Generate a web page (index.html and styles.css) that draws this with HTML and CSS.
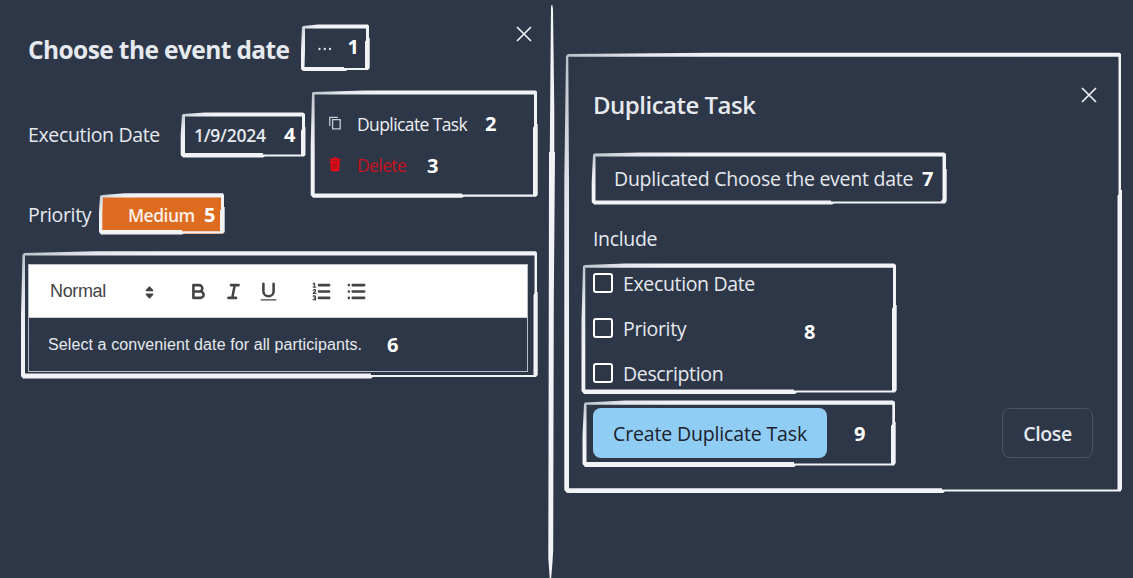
FILE: index.html
```html
<!DOCTYPE html>
<html lang="en">
<head>
<meta charset="utf-8">
<title>Duplicate Task</title>
<link rel="stylesheet" href="styles.css">
</head>
<body>
<main class="board">
  <section class="panel task">
    <header class="task-head">
      <h1 class="task-title"><span class="t">Choose the event date</span></h1>
      <button class="more"><svg width="16" height="4" viewBox="0 0 16 4"><circle cx="2.5" cy="2" r="1.15"/><circle cx="7.8" cy="2" r="1.15"/><circle cx="13" cy="2" r="1.15"/></svg></button>
      <b class="num">1</b>
      <button class="x"><svg width="16" height="16" viewBox="0 0 16 16"><path d="M1 1 15 15M15 1 1 15"/></svg></button>
    </header>
    <div class="field">
      <span class="label exec"><span class="t">Execution Date</span></span>
      <span class="date"><span class="t">1/9/2024</span></span>
      <b class="num">4</b>
    </div>
    <div class="field prio-row">
      <span class="label prio"><span class="t">Priority</span></span>
      <span class="badge"><span class="t">Medium</span><b class="num">5</b></span>
    </div>
    <div class="editor">
      <div class="toolbar">
        <span class="picker"><span class="t">Normal</span><svg width="9" height="13" viewBox="0 0 9 13"><path d="M4.5 1.2 7.5 4.4H1.5ZM1.5 8.4H7.5L4.5 11.6Z"/></svg></span>
        <svg class="tool bold" viewBox="0 0 18 18"><path d="M5 4H9.5A2.5 2.5 0 0 1 12 6.5V6.5A2.5 2.5 0 0 1 9.5 9H5ZM5 9H10.5A2.5 2.5 0 0 1 13 11.5V11.5A2.5 2.5 0 0 1 10.5 14H5Z"/></svg>
        <svg class="tool italic" viewBox="0 0 18 18"><path d="M7 4H13M5 14H11M8 14 10 4"/></svg>
        <svg class="tool under" viewBox="0 0 18 18"><path d="M5 3V9A4.012 4.012 0 0 0 13 9V3"/><path class="thin" d="M3.2 15.5H14.8"/></svg>
        <svg class="tool ordered" viewBox="0 0 18 18"><path d="M7 4H15M7 9H15M7 14H15"/><path class="thin" d="M2.5 5.5H4.5M3.5 5.5V2.5L2.6 3"/><path class="thin" d="M2.5 8C3 7.2 4.5 7.3 4.4 8.3 4.3 9 2.8 9.7 2.6 10.5H4.6"/><path class="thin" d="M2.5 12.6C3.3 12.2 4.4 12.4 4.3 13.2 4.2 14 3.3 14 3.3 14 4.8 14 4.8 15.5 3.6 15.6 3.1 15.6 2.7 15.5 2.4 15.3"/></svg>
        <svg class="tool bullet" viewBox="0 0 18 18"><path d="M6 4H15M6 9H15M6 14H15M3 4H3.01M3 9H3.01M3 14H3.01"/></svg>
      </div>
      <div class="content"><span class="t">Select a convenient date for all participants.</span><b class="num">6</b></div>
    </div>
    <div class="menu">
      <div class="item"><svg class="mi" width="14" height="15" viewBox="0 0 14 15"><path d="M0.8 10V1.3H9M3.6 3.7H11.2V12.8H3.6Z"/></svg><span class="t dup">Duplicate Task</span><b class="num">2</b></div>
      <div class="item danger"><svg class="mi" width="14" height="15" viewBox="0 0 14 15"><path fill-rule="evenodd" d="M0.5 2.1H3.2L4.3 0.3H7.7L8.8 2.1H11.5V3.9H0.5ZM4.4 2.1H7.6L7.1 1.4H4.9ZM1.3 3.5H10.7L10.2 13Q10.1 14.3 9 14.3H3Q1.9 14.3 1.8 13Z"/><path class="slot" d="M4.1 5.6V12.6M6 5.6V12.6M7.9 5.6V12.6"/></svg><span class="t del">Delete</span><b class="num">3</b></div>
    </div>
  </section>
  <section class="panel dialog">
    <header class="dialog-head">
      <h2 class="dialog-title"><span class="t">Duplicate Task</span></h2>
      <button class="x"><svg width="16" height="16" viewBox="0 0 16 16"><path d="M1 1 15 15M15 1 1 15"/></svg></button>
    </header>
    <div class="name"><span class="t">Duplicated Choose the event date</span><b class="num">7</b></div>
    <div class="include"><span class="t">Include</span></div>
    <div class="options">
      <div class="checks">
        <label class="check"><i class="box"></i><span class="t">Execution Date</span></label>
        <label class="check"><i class="box"></i><span class="t">Priority</span></label>
        <label class="check"><i class="box"></i><span class="t">Description</span></label>
      </div>
      <b class="num">8</b>
    </div>
    <footer class="actions">
      <button class="create"><span class="t">Create Duplicate Task</span></button>
      <b class="num">9</b>
      <button class="close"><span class="t">Close</span></button>
    </footer>
  </section>
  <svg class="marks" width="1133" height="578" viewBox="0 0 1133 578">
    <defs><linearGradient id="ink" x1="0" y1="0" x2="0.25" y2="0.1"><stop offset="0" stop-color="#b9bfc9"/><stop offset="0.5" stop-color="#e4e7ed"/><stop offset="1" stop-color="#f1f3f7"/></linearGradient></defs>
    <g fill="url(#ink)" fill-rule="evenodd">
      <path d="M303 26 318 24.5H368L369 26V38H369.7V68L368 70H347L346 71H303L301 69V50L302 27ZM305 28.5V50L304.5 67H344V68H365V42L366 40V28.5Z"/>
      <path d="M313 92 365 90.5H536L537 92V124H537.7V195L536 196.8H464L462 197.8H313L310.7 195V145L312 93ZM314.5 94.5 314.7 145V193.5H462V194.5H533V128L534 126V94.5Z"/>
      <path d="M183 114 205 112.5H303L305 114V127H305.5V155L304 156.5H265L263 157.5H183L180.7 155V135L182 115ZM185 116.5V153H263V154.5H301V131L302 129V116.5Z"/>
      <path d="M102 195 125 193.3H223L224 195V207H224.7V232L223 233.5H184L182 234.5H101L99 232V212L100 196ZM103 197.5 102.3 212V230H182V231.3H220V211L221 209V197.5Z"/>
      <path d="M24 253 95 251.3H536L537 253V292H537.7V375L536 377H373L371 378.5H23L21 376V315L22.5 255ZM25 255.5V373.5H371V375H533.5V295L534.5 293V255.5Z"/>
      <path d="M568 54 710 52.7H1119.5L1121 54V190H1122V489L1120.5 491.5H945L943 493H567L564.3 490V180L566 56ZM568.3 56.8 569 180V488.3H942V489.5H1117.5V196L1118.5 194V56.8Z"/>
      <path d="M594 153.5 640 152.5H944L946 154V169H946.7V201L945 203.5H834L832 204.5H594L591.7 202V182L593 155ZM595.5 156.5V200.5H831V201.5H941L942.5 199V156.5Z"/>
      <path d="M585 265 625 263.5H894L896 265V305H896.7V390L895 392.5H797L795 394H584L581.5 391V320L583 266ZM585.3 267.7V389.5H794V390.5H892V309L893 307V267.7Z"/>
      <path d="M585 402.5 625 400.5H893L895 402V422H895.7V463L894 465.5H796L794 467H585L582.5 464V435L584 404ZM586.5 404.7V462H794V463.5H891V426L892.3 424V404.7Z"/>
      <path d="M551 7 551.6 5H552.3L553 9 554.3 110V152H555L553.8 300 553.2 550 552.5 562 551.2 578H549.7L548.3 558 548.8 300 549 152H549.8L550.5 60Z"/>
    </g>
  </svg>
</main>
</body>
</html>
```
FILE: styles.css
```css
* { box-sizing: border-box; }
body { margin: 0; background: #2d3748; color: #e6e9ee; font-family: "Open Sans", "Noto Sans", sans-serif; font-size: 19.5px; letter-spacing: -0.35px; line-height: 28px; }
button { padding: 0; border: 0; background: none; color: inherit; font: inherit; letter-spacing: inherit; display: flex; align-items: center; justify-content: center; }
h1, h2 { margin: 0; }
svg { display: block; flex: none; }
.t { white-space: nowrap; }
.board { position: relative; width: 1133px; height: 578px; display: grid; grid-template-columns: 564px 569px; overflow: hidden; }
.panel { position: relative; }
.num { font-weight: 700; font-size: 20px; color: #fff; letter-spacing: 0; }
.x svg { fill: none; stroke: #eceef2; stroke-width: 1.7; }
.task { padding: 27px 28px 0 28px; }
.task-head { display: flex; align-items: center; height: 46px; }
.task-title { flex: none; width: 289px; font-size: 24.5px; font-weight: 700; letter-spacing: -0.6px; }
.more { flex: none; width: 16px; height: 20px; margin-top: -2px; }
.more svg { fill: #e6e9ee; }
.task-head .num { flex: none; width: 12px; margin: -6px 0 0 14px; text-align: right; }
.task-head .x { flex: none; width: 16px; margin: -32px 0 0 157px; }
.field { display: flex; align-items: center; height: 44px; margin-top: 40px; }
.exec { width: 166px; }
.date { width: 90px; font-size: 17.5px; font-weight: 600; letter-spacing: -0.25px; }
.prio-row { height: 38px; margin-top: 39px; }
.prio { width: 73px; }
.badge { display: flex; align-items: center; width: 122px; height: 38px; padding-left: 27px; background: #dd6b20; color: #fbefe6; font-size: 17.5px; font-weight: 600; letter-spacing: -0.5px; }
.badge .t { width: 76px; }
.editor { width: 500px; height: 108px; margin-top: 30px; border: 1px solid #b8bec8; font-family: "Liberation Sans", Arial, sans-serif; }
.toolbar { display: flex; align-items: center; height: 53px; padding-left: 21px; background: #fff; border-bottom: 1px solid #ccc; color: #444; font-size: 18px; }
.picker { display: flex; align-items: center; justify-content: space-between; width: 104px; }
.picker svg { margin-top: 2px; fill: #444; stroke: #444; stroke-width: 1.6; stroke-linejoin: round; }
.tool { width: 23px; height: 23px; margin-top: 1px; fill: none; stroke: #444; stroke-width: 2; stroke-linecap: round; stroke-linejoin: round; }
.tool .thin { stroke-width: 1; }
.bold { margin-left: 33px; }
.italic, .under, .bullet { margin-left: 12px; }
.ordered { margin-left: 30px; }
.content { display: flex; align-items: center; height: 53px; padding-left: 19px; font-size: 16px; letter-spacing: 0.1px; }
.content .t { width: 339px; }
.content .num { font-family: "Open Sans", sans-serif; }
.menu { position: absolute; left: 312px; top: 92px; width: 224px; height: 104px; padding: 11px 0 0 17px; font-size: 17.5px; letter-spacing: -0.6px; }
.item { display: flex; align-items: center; height: 42px; color: #eef0f4; }
.mi { margin-top: -2px; fill: none; stroke: #c5cad3; stroke-width: 1.3; }
.item .dup { margin-left: 14px; width: 128px; }
.item .del { margin-left: 14px; width: 70px; margin-top: -2px; }
.danger { color: #c9101c; }
.danger .mi { margin-top: -4px; fill: #f30610; stroke: none; }
.danger .slot { stroke: #7d1c2c; stroke-width: 0.8; }
.dialog { padding: 79px 36px 0 29px; }
.dialog-head { display: flex; justify-content: space-between; height: 52px; align-items: center; }
.dialog-head .x { margin: -20px 0 0 0; width: 16px; }
.dialog-title { font-size: 24px; font-weight: 600; letter-spacing: -0.5px; }
.name { display: flex; align-items: center; height: 50px; margin-top: 23px; padding-left: 21px; letter-spacing: -0.25px; }
.name .t { width: 308px; }
.include { margin-top: 21px; }
.options { display: flex; align-items: center; height: 120px; margin-top: 16px; }
.options .num { margin-top: 6px; }
.checks { display: grid; gap: 17px; width: 211px; }
.check { display: flex; align-items: center; gap: 10px; height: 28px; }
.box { width: 20px; height: 20px; margin-top: -2px; border: 2px solid #fff; border-radius: 3px; }
.actions { display: flex; align-items: center; margin-top: 19px; }
.actions .t { margin-top: 1px; }
.create { width: 234px; height: 50px; border-radius: 8px; background: #90cdf4; color: #1a202c; font-weight: 500; letter-spacing: -0.15px; }
.actions .num { margin-left: 27px; margin-top: 1px; }
.close { width: 91px; height: 50px; margin-left: auto; margin-right: 4px; border: 1px solid #4a5366; border-radius: 8px; font-weight: 600; }
.marks { position: absolute; left: 0; top: 0; pointer-events: none; }
```
